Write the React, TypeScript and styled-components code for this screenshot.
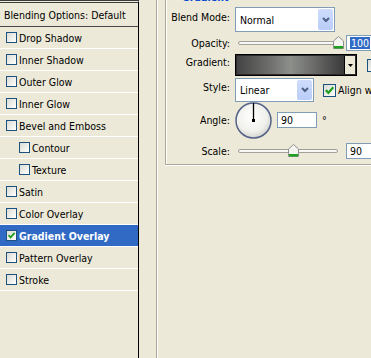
import React from "react";
import styled, { createGlobalStyle } from "styled-components";

const GlobalStyle = createGlobalStyle`
  html, body {
    margin: 0;
    padding: 0;
    height: 100%;
    overflow: hidden;
    background: #ece9d8;
  }
  body {
    font-family: "DejaVu Sans Condensed", "DejaVu Sans", Tahoma, sans-serif;
    font-size: 10.5px;
    color: #000;
  }
  #root {
    height: 100%;
  }
`;

const Window = styled.div`
  display: flex;
  width: 371px;
  height: 358px;
  overflow: hidden;
`;

/* ---------- left: list of layer effects ---------- */

const StyleList = styled.div`
  width: 138px;
  flex-shrink: 0;
  border-right: 1px solid #000;
  border-top: 3px double #3c3c3c;
`;

const ListHeader = styled.div`
  height: 23px;
  border-bottom: 1px solid #4a4a4a;
  display: flex;
  align-items: center;
  padding-left: 4px;
  white-space: nowrap;
`;

const ListRow = styled.div<{ $indent: number; $selected?: boolean }>`
  height: 21px;
  border-bottom: 1px solid #fff;
  display: flex;
  align-items: center;
  padding-left: ${(p) => p.$indent}px;
  white-space: nowrap;
  background: ${(p) => (p.$selected ? "#316ac5" : "transparent")};
  color: ${(p) => (p.$selected ? "#fff" : "#000")};
  font-weight: ${(p) => (p.$selected ? "bold" : "normal")};
`;

const Box = styled.span<{ $size: number }>`
  width: ${(p) => p.$size}px;
  height: ${(p) => p.$size}px;
  box-sizing: border-box;
  flex-shrink: 0;
  border: 1px solid #1c5180;
  background: linear-gradient(135deg, #dcdcd7 0%, #f4f4f0 70%, #fff 100%);
  display: flex;
  align-items: center;
  justify-content: center;
  margin-right: 2px;
`;

const Check = ({ size, checked }: { size: number; checked?: boolean }) => (
  <Box $size={size}>
    {checked && (
      <svg width={size - 2} height={size - 2} viewBox="0 0 9 9">
        <path d="M1.5 4.2 L3.6 6.4 L7.6 1.8" fill="none" stroke="#21a121" strokeWidth="1.8" />
      </svg>
    )}
  </Box>
);

/* ---------- right: gradient overlay options ---------- */

const Options = styled.div`
  flex: 1;
  display: flex;
  padding-left: 17px;
  min-width: 0;
`;

const OuterGroup = styled.div`
  flex: 1;
  border-left: 1px solid #aca899;
  box-shadow: inset 1px 0 0 #fff;
  padding-left: 8px;
  min-width: 0;
`;

const InnerGroup = styled.div`
  margin-top: -9px;
  border-left: 1px solid #aca899;
  border-bottom: 1px solid #aca899;
  box-shadow: inset 1px 0 0 #fff, 0 1px 0 #fff;
  padding: 0 0 5px 1px;
`;

const Legend = styled.div`
  height: 14px;
  line-height: 13px;
  margin-left: 15px;
  font-weight: bold;
  color: #0046d5;
`;

const Row = styled.div<{ $h: number; $mt: number }>`
  display: flex;
  align-items: center;
  height: ${(p) => p.$h}px;
  margin-top: ${(p) => p.$mt}px;
  white-space: nowrap;
`;

const Label = styled.div<{ $lift?: number }>`
  width: 63px;
  margin-right: 5px;
  text-align: right;
  flex-shrink: 0;
  margin-bottom: ${(p) => (p.$lift || 0) * 2}px;
`;

const Combo = styled.div<{ $w: number; $h: number }>`
  width: ${(p) => p.$w}px;
  height: ${(p) => p.$h}px;
  box-sizing: border-box;
  flex-shrink: 0;
  border: 1px solid #7f9db9;
  background: #fff;
  display: flex;
  align-items: center;
  padding: 1px;
`;

const ComboText = styled.span`
  flex: 1;
  padding-left: 3px;
`;

const ComboButton = styled.span`
  width: 15px;
  align-self: stretch;
  border-radius: 2px;
  background: linear-gradient(#cfdcfb, #b9cdf8);
  display: flex;
  align-items: center;
  justify-content: center;
`;

const Chevron = () => (
  <svg width="8" height="6" viewBox="0 0 8 6">
    <path d="M1 1 L4 4 L7 1" fill="none" stroke="#4d6185" strokeWidth="2" />
  </svg>
);

const SliderWrap = styled.div`
  position: relative;
  width: 100px;
  height: 16px;
  margin-left: 3px;
  flex-shrink: 0;
  display: flex;
  align-items: center;
`;

const Track = styled.div`
  width: 100%;
  height: 2px;
  border: 1px solid #a3a19b;
  border-radius: 2px;
  background: #f7f7f4;
`;

const Thumb = styled.svg`
  position: absolute;
  top: 1px;
`;

const Slider = ({ value, min, max }: { value: number; min: number; max: number }) => {
  const frac = (value - min) / (max - min);
  return (
    <SliderWrap>
      <Track />
      <Thumb width="11" height="13" viewBox="0 0 11 13" style={{ left: frac * 100 - 5.5 }}>
        <path d="M0.5 5 L5.5 0.5 L10.5 5 L10.5 12.5 L0.5 12.5 Z" fill="#f4f4f0" stroke="#8e8f8f" />
        <rect x="1" y="10" width="9" height="2.5" fill="#21a121" />
      </Thumb>
    </SliderWrap>
  );
};

const TextBox = styled.div<{ $w: number; $ml: number }>`
  width: ${(p) => p.$w}px;
  height: 16px;
  box-sizing: border-box;
  flex-shrink: 0;
  margin-left: ${(p) => p.$ml}px;
  border: 1px solid #7f9db9;
  background: #fff;
  padding-left: 3px;
  display: flex;
  align-items: center;
`;

const Selected = styled.span`
  background: #316ac5;
  color: #fff;
  padding: 0 1px;
`;

const GradientPicker = styled.div`
  width: 122px;
  height: 22px;
  box-sizing: border-box;
  flex-shrink: 0;
  border: 1px solid #000;
  box-shadow: inset 0 0 0 1px #2a2a2a;
  display: flex;
`;

const GradientFill = styled.div`
  flex: 1;
  margin: 1px 0 1px 1px;
  background: linear-gradient(to right, #434343 0%, #6a6b69 28%, #8d8f8b 50%, #676866 74%, #393939 100%);
  border-right: 1px solid #000;
`;

const PickerArrow = styled.div`
  width: 10px;
  background: #ece9d8;
  margin: 1px 1px 1px 0;
  display: flex;
  align-items: center;
  justify-content: center;
`;

const Inline = styled.div<{ $ml: number }>`
  display: flex;
  align-items: center;
  margin-left: ${(p) => p.$ml}px;
`;

const Degree = styled.span`
  margin-left: 5px;
  align-self: flex-start;
  margin-top: 12px;
`;

const Dial = () => (
  <svg width="37" height="37" viewBox="0 0 37 37" style={{ flexShrink: 0 }}>
    <defs>
      <radialGradient id="dialFill" cx="45%" cy="40%" r="60%">
        <stop offset="0%" stopColor="#ffffff" />
        <stop offset="70%" stopColor="#f0f0ec" />
        <stop offset="100%" stopColor="#d6d6d0" />
      </radialGradient>
    </defs>
    <circle cx="18.5" cy="18.5" r="17.5" fill="url(#dialFill)" stroke="#55628a" strokeWidth="1.5" />
    <line x1="18.5" y1="18.5" x2="18.5" y2="1" stroke="#000" strokeWidth="1.3" />
    <rect x="17" y="17" width="3" height="3" fill="#000" />
  </svg>
);

const effects: { name: string; indent?: boolean; checked?: boolean }[] = [
  { name: "Drop Shadow" },
  { name: "Inner Shadow" },
  { name: "Outer Glow" },
  { name: "Inner Glow" },
  { name: "Bevel and Emboss" },
  { name: "Contour", indent: true },
  { name: "Texture", indent: true },
  { name: "Satin" },
  { name: "Color Overlay" },
  { name: "Gradient Overlay", checked: true },
  { name: "Pattern Overlay" },
  { name: "Stroke" },
];

const App = () => {
  return (
    <>
      <GlobalStyle />
      <Window>
        <StyleList>
          <ListHeader>Blending Options: Default</ListHeader>
          {effects.map((e) => (
            <ListRow key={e.name} $indent={e.indent ? 19 : 6} $selected={e.checked}>
              <Check size={11} checked={e.checked} />
              {e.name}
            </ListRow>
          ))}
        </StyleList>

        <Options>
          <OuterGroup>
            <InnerGroup>
              <Legend>Gradient</Legend>

              <Row $h={25} $mt={2}>
                <Label $lift={2.5}>Blend Mode:</Label>
                <Combo $w={100} $h={25}>
                  <ComboText>Normal</ComboText>
                  <ComboButton>
                    <Chevron />
                  </ComboButton>
                </Combo>
              </Row>

              <Row $h={16} $mt={3}>
                <Label $lift={0.5}>Opacity:</Label>
                <Slider value={100} min={0} max={100} />
                <TextBox $w={40} $ml={8}>
                  <Selected>100</Selected>
                </TextBox>
              </Row>

              <Row $h={22} $mt={3}>
                <Label $lift={3}>Gradient:</Label>
                <GradientPicker>
                  <GradientFill />
                  <PickerArrow>
                    <svg width="5" height="3" viewBox="0 0 5 3">
                      <path d="M0 0 L5 0 L2.5 3 Z" fill="#000" />
                    </svg>
                  </PickerArrow>
                </GradientPicker>
                <Inline $ml={10}>
                  <Check size={13} />
                  Reverse
                </Inline>
              </Row>

              <Row $h={24} $mt={2}>
                <Label $lift={3.5}>Style:</Label>
                <Combo $w={79} $h={24}>
                  <ComboText>Linear</ComboText>
                  <ComboButton>
                    <Chevron />
                  </ComboButton>
                </Combo>
                <Inline $ml={9}>
                  <Check size={13} checked />
                  Align with Layer
                </Inline>
              </Row>

              <Row $h={36} $mt={0}>
                <Label>Angle:</Label>
                <Dial />
                <TextBox $w={40} $ml={5}>90</TextBox>
                <Degree>°</Degree>
              </Row>

              <Row $h={16} $mt={5}>
                <Label $lift={0.5}>Scale:</Label>
                <Slider value={90} min={10} max={155} />
                <TextBox $w={40} $ml={8}>90</TextBox>
              </Row>
            </InnerGroup>
          </OuterGroup>
        </Options>
      </Window>
    </>
  );
};

export default App;
